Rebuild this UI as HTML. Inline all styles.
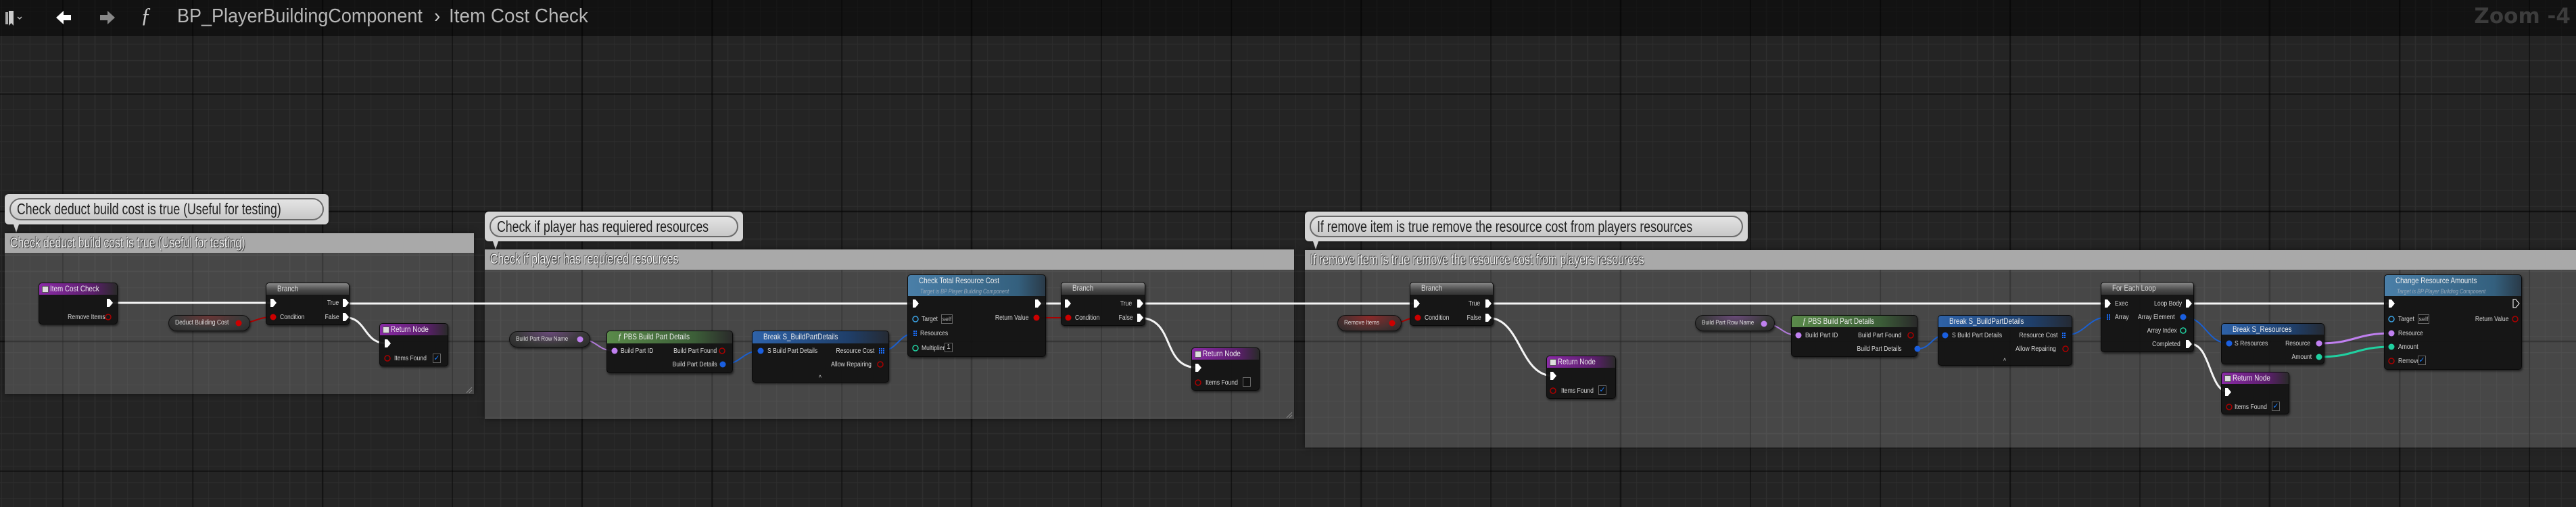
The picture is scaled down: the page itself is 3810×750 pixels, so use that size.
<!DOCTYPE html>
<html><head><meta charset="utf-8"><style>
*{margin:0;padding:0;box-sizing:border-box}
html,body{width:3810px;height:750px;overflow:hidden}
body{position:relative;background-color:#242424;
background-image:
repeating-linear-gradient(90deg,rgba(0,0,0,.55) 0 2px,transparent 2px 192px),
repeating-linear-gradient(0deg,rgba(0,0,0,.55) 0 2px,transparent 2px 192px),
repeating-linear-gradient(90deg,#2e2e2e 0 1px,transparent 1px 24px),
repeating-linear-gradient(0deg,#2e2e2e 0 1px,transparent 1px 24px);
background-position:92px 0,0 140px,20px 0,0 12px;
font-family:"Liberation Sans",sans-serif;}
.top{position:absolute;left:0;top:0;width:3810px;height:53px;background:rgba(0,0,0,.5);z-index:5}
.crumb{position:absolute;top:8px;font-size:29px;color:#b8b8b8;white-space:nowrap;transform:scaleX(.96);transform-origin:0 50%}
.zoom{position:absolute;right:8px;top:6px;font-family:"DejaVu Sans","Liberation Sans",sans-serif;font-weight:bold;font-size:31px;color:#3c3c3c}
.grp{position:absolute;background:rgba(255,255,255,.16);box-shadow:0 0 8px rgba(0,0,0,.5);z-index:1}
.gh{position:absolute;left:0;top:0;right:0;height:29px;background:#a9a9a9;color:#f0f0f0;font-size:21px;line-height:29px;padding-left:8px;text-shadow:1px 1px 1px #222,-1px -1px 1px #444;white-space:nowrap}
.gh span{display:inline-block;transform:scaleX(.75);transform-origin:0 50%}
.bub{position:absolute;background:#d4d4d4;border-radius:6px;z-index:1;box-shadow:0 0 4px rgba(0,0,0,.4)}
.bub div{position:absolute;left:7px;right:7px;top:6px;bottom:6px;border:2px solid #6a6a6a;border-radius:18px;color:#222;font-size:23px;line-height:28px;padding-left:9px;white-space:nowrap;background:linear-gradient(#e4e4e4,#c8c8c8)}
.bub span{display:inline-block;transform:scaleX(.77);transform-origin:0 50%}
.tail{position:absolute;width:0;height:0;border-left:4px solid transparent;border-right:4px solid transparent;border-top:12px solid #d4d4d4;z-index:1}
.n{position:absolute;background:rgba(18,18,18,.93);border:1px solid #0a0a0a;border-radius:5px;z-index:2;box-shadow:1px 2px 3px rgba(0,0,0,.6);overflow:hidden}
.h{position:absolute;left:0;top:0;right:0;color:#eee;font-size:12px;padding-left:16px;white-space:nowrap;line-height:17px}
.h b{font-weight:normal;display:inline-block;transform:scaleX(.82);transform-origin:0 50%}
.pu{background:linear-gradient(90deg,#8a2aa6,#5a1f6a 70%,#2a2a2a)}
.gr{background:linear-gradient(180deg,#8a8a8a,#4a4a4a 60%,#333)}
.gn{background:linear-gradient(90deg,#5a8a4a,#3c5e38 70%,#2a2a2a)}
.bl{background:linear-gradient(90deg,#2e62a8,#1f3f6a 70%,#252a33)}
.tl{background:linear-gradient(90deg,#4a7fa8,#34607e 80%,#2a3a48)}
.sub{position:absolute;left:18px;top:16px;font-size:9px;font-style:italic;color:#9ab;transform:scaleX(.82);transform-origin:0 50%}
.pill{position:absolute;border-radius:12px;border:1px solid #111;z-index:2;color:#ddd;font-size:10px;line-height:22px;padding-left:9px;white-space:nowrap;box-shadow:1px 2px 3px rgba(0,0,0,.6)}
.pill span{display:inline-block;transform:scaleX(.85);transform-origin:0 50%}
.l{position:absolute;font-size:10.5px;color:#d6d6d6;white-space:nowrap;z-index:4;line-height:14px;transform:scaleX(.82);transform-origin:0 50%}
.l.r{transform-origin:100% 50%}
.box{position:absolute;width:12px;height:14px;background:#111;border:1px solid #666;z-index:4;color:#1a7fff;font-size:11px;line-height:12px;text-align:center}
.ic{position:absolute;width:10px;height:10px;background:#ddd;border:1px solid #555;left:4px;top:4px}
svg{position:absolute;left:0;top:0}
</style></head><body>

<div class="top">
<svg width="120" height="53" style="left:0;top:0"><rect x="8" y="18" width="4" height="18" fill="#aaa"/><path d="M13 16h7v22l-3.5-4-3.5 4z" fill="#ccc"/><path d="M26 25l3 3 3-3" stroke="#bbb" stroke-width="1.5" fill="none"/>
<path d="M83 26l11-10v6h11v8H94v6z" fill="#fff"/></svg>
<svg width="60" height="53" style="left:130px;top:0"><path d="M40 26L29 16v6H18v8h11v6z" fill="#888"/></svg>
<div class="crumb" style="left:208px;top:4px;font-family:'Liberation Serif',serif;font-style:italic;font-size:32px;color:#ccc">ƒ</div>
<div class="crumb" style="left:262px;transform:scaleX(.93)">BP_PlayerBuildingComponent</div>
<div class="crumb" style="left:642px;color:#ccc">›</div>
<div class="crumb" style="left:664px">Item Cost Check</div>
<div class="zoom">Zoom -4</div>
</div>

<!-- groups -->
<div class="bub" style="left:7px;top:287px;width:479px;height:45px"><div><span>Check deduct build cost is true (Useful for testing)</span></div></div>
<div class="tail" style="left:20px;top:332px"></div>
<div class="grp" style="left:7px;top:345px;width:694px;height:238px"><div class="gh"><span>Check deduct build cost is true (Useful for testing)</span></div></div>

<div class="bub" style="left:717px;top:313px;width:382px;height:44px"><div><span>Check if player has requiered resources</span></div></div>
<div class="tail" style="left:729px;top:357px"></div>
<div class="grp" style="left:717px;top:369px;width:1197px;height:251px"><div class="gh" style="height:30px"><span>Check if player has requiered resources</span></div></div>

<div class="bub" style="left:1930px;top:313px;width:655px;height:44px"><div><span>If remove item is true remove the resource cost from players resources</span></div></div>
<div class="tail" style="left:1942px;top:357px"></div>
<div class="grp" style="left:1930px;top:370px;width:1890px;height:292px"><div class="gh"><span>If remove item is true remove the resource cost from players resources</span></div></div>

<!-- wires -->
<svg width="3810" height="750" style="z-index:1;position:absolute" fill="none">
<g stroke="#f4f4f4" stroke-width="3">
<path d="M162 448H404M517 449H1354M1535 449H1569M1694 449H2097M2209 449H3119M3240 449H3537"/>
<path d="M507 469C545 469 535 508 573 508"/>
<path d="M1684 470C1740 470 1716 544 1772 544"/>
<path d="M2200 470C2250 470 2247 556 2297 556"/>
<path d="M3240 509C3270 509 3267 580 3297 580"/>
</g>
<g stroke-width="2">
<path d="M353 478C378 478 379 469 404 469" stroke="#a00"/>
<path d="M1533 470H1580" stroke="#a00"/>
<path d="M2059 478C2078 478 2078 470 2097 470" stroke="#a00"/>
<path d="M858 502C884 502 883 519 909 519" stroke="#b07ad8"/>
<path d="M2609 479C2635 479 2634 496 2660 496" stroke="#b07ad8"/>
<path d="M1069 539C1097 539 1097 519 1125 519" stroke="#1a5fd0"/>
<path d="M1303 519C1328 519 1329 493 1354 493" stroke="#1a5fd0"/>
<path d="M2836 516C2856 516 2857 496 2877 496" stroke="#1a5fd0"/>
<path d="M3053 496C3086 496 3086 469 3119 469" stroke="#1a5fd0"/>
<path d="M3229 469C3263 469 3263 508 3297 508" stroke="#1a5fd0"/>
<path d="M3430 508C3484 508 3483 493 3537 493" stroke="#c080f0" stroke-width="3"/>
<path d="M3430 528C3484 528 3483 513 3537 513" stroke="#20d0a0" stroke-width="3"/>
</g>
</svg>

<!-- nodes G1 -->
<div class="n" style="left:57px;top:418px;width:117px;height:62px"><div class="h pu" style="height:17px"><span class="ic"></span><b>Item Cost Check</b></div></div>
<div class="l r" style="left:88px;top:462px">Remove Items</div>
<div class="n" style="left:393px;top:418px;width:124px;height:63px"><div class="h gr" style="height:17px;color:#ddd"><b>Branch</b></div></div>
<div class="l" style="left:414px;top:462px">Condition</div>
<div class="l r" style="left:480px;top:441px">True</div>
<div class="l r" style="left:476px;top:462px">False</div>
<div class="pill" style="left:249px;top:466px;width:121px;height:24px;background:radial-gradient(ellipse at 50% 0,#6a3535,#3a3a3a 60%,#2a2a2a)"><span>Deduct Building Cost</span></div>
<div class="n" style="left:561px;top:478px;width:102px;height:64px"><div class="h pu" style="height:17px"><span class="ic"></span><b>Return Node</b></div></div>
<div class="l" style="left:583px;top:523px">Items Found</div>
<div class="box" style="left:640px;top:523px">✓</div>

<!-- G2 -->
<div class="pill" style="left:753px;top:490px;width:120px;height:24px;background:radial-gradient(ellipse at 50% 0,#6a4a7a,#3a3a3a 60%,#2a2a2a);font-size:9.5px"><span>Build Part Row Name</span></div>
<div class="n" style="left:897px;top:489px;width:187px;height:63px"><div class="h gn" style="height:18px"><b>ƒ PBS Build Part Details</b></div></div>
<div class="l" style="left:918px;top:512px">Build Part ID</div>
<div class="l r" style="left:982px;top:512px">Build Part Found</div>
<div class="l r" style="left:980px;top:532px">Build Part Details</div>
<div class="n" style="left:1112px;top:489px;width:203px;height:77px"><div class="h bl" style="height:18px"><b>Break S_BuildPartDetails</b></div></div>
<div class="l" style="left:1135px;top:512px">S Build Part Details</div>
<div class="l r" style="left:1224px;top:512px">Resource Cost</div>
<div class="l r" style="left:1216px;top:532px">Allow Repairing</div>
<div class="l" style="left:1211px;top:552px">^</div>
<div class="n" style="left:1342px;top:406px;width:205px;height:122px"><div class="h tl" style="height:31px"><b>Check Total Resource Cost</b><div class="sub">Target is BP Player Building Component</div></div></div>
<div class="l" style="left:1363px;top:465px">Target</div>
<div class="box" style="left:1392px;top:465px;width:17px;color:#aaa;font-size:9px">self</div>
<div class="l r" style="left:1461px;top:463px">Return Value</div>
<div class="l" style="left:1361px;top:486px">Resources</div>
<div class="l" style="left:1363px;top:508px">Multiplier</div>
<div class="box" style="left:1397px;top:507px;color:#ccc;font-size:10px">1</div>
<div class="n" style="left:1569px;top:417px;width:125px;height:65px"><div class="h gr" style="height:18px;color:#ddd"><b>Branch</b></div></div>
<div class="l" style="left:1590px;top:463px">Condition</div>
<div class="l r" style="left:1653px;top:442px">True</div>
<div class="l r" style="left:1650px;top:463px">False</div>
<div class="n" style="left:1762px;top:514px;width:101px;height:64px"><div class="h pu" style="height:17px"><span class="ic"></span><b>Return Node</b></div></div>
<div class="l" style="left:1783px;top:559px">Items Found</div>
<div class="box" style="left:1838px;top:558px"></div>

<!-- G3 -->
<div class="pill" style="left:1978px;top:466px;width:95px;height:24px;background:radial-gradient(ellipse at 50% 10%,#8a2a2a,#4a3030 60%,#2a2a2a);font-size:9.5px"><span>Remove Items</span></div>
<div class="n" style="left:2085px;top:417px;width:124px;height:65px"><div class="h gr" style="height:18px;color:#ddd"><b>Branch</b></div></div>
<div class="l" style="left:2107px;top:463px">Condition</div>
<div class="l r" style="left:2168px;top:442px">True</div>
<div class="l r" style="left:2165px;top:463px">False</div>
<div class="n" style="left:2287px;top:526px;width:103px;height:64px"><div class="h pu" style="height:17px"><span class="ic"></span><b>Return Node</b></div></div>
<div class="l" style="left:2309px;top:571px">Items Found</div>
<div class="box" style="left:2364px;top:570px">✓</div>
<div class="pill" style="left:2507px;top:466px;width:118px;height:24px;background:radial-gradient(ellipse at 50% 0,#6a4a7a,#3a3a3a 60%,#2a2a2a);font-size:9.5px"><span>Build Part Row Name</span></div>
<div class="n" style="left:2649px;top:466px;width:187px;height:62px"><div class="h gn" style="height:17px"><b>ƒ PBS Build Part Details</b></div></div>
<div class="l" style="left:2670px;top:489px">Build Part ID</div>
<div class="l r" style="left:2734px;top:489px">Build Part Found</div>
<div class="l r" style="left:2732px;top:509px">Build Part Details</div>
<div class="n" style="left:2866px;top:466px;width:199px;height:75px"><div class="h bl" style="height:17px"><b>Break S_BuildPartDetails</b></div></div>
<div class="l" style="left:2887px;top:489px">S Build Part Details</div>
<div class="l r" style="left:2974px;top:489px">Resource Cost</div>
<div class="l r" style="left:2968px;top:509px">Allow Repairing</div>
<div class="l" style="left:2963px;top:527px">^</div>
<div class="n" style="left:3107px;top:417px;width:138px;height:104px"><div class="h gr" style="height:18px;color:#ddd"><b>For Each Loop</b></div></div>
<div class="l" style="left:3128px;top:442px">Exec</div>
<div class="l r" style="left:3177px;top:442px">Loop Body</div>
<div class="l" style="left:3128px;top:462px">Array</div>
<div class="l r" style="left:3150px;top:462px">Array Element</div>
<div class="l r" style="left:3166px;top:482px">Array Index</div>
<div class="l r" style="left:3174px;top:502px">Completed</div>
<div class="n" style="left:3285px;top:478px;width:153px;height:61px"><div class="h bl" style="height:16px;line-height:16px"><b>Break S_Resources</b></div></div>
<div class="l" style="left:3305px;top:501px">S Resources</div>
<div class="l r" style="left:3372px;top:501px">Resource</div>
<div class="l r" style="left:3383px;top:521px">Amount</div>
<div class="n" style="left:3285px;top:550px;width:101px;height:63px"><div class="h pu" style="height:17px"><span class="ic"></span><b>Return Node</b></div></div>
<div class="l" style="left:3305px;top:595px">Items Found</div>
<div class="box" style="left:3360px;top:594px">✓</div>
<div class="n" style="left:3526px;top:406px;width:204px;height:141px"><div class="h tl" style="height:31px"><b>Change Resource Amounts</b><div class="sub">Target is BP Player Building Component</div></div></div>
<div class="l" style="left:3547px;top:465px">Target</div>
<div class="box" style="left:3576px;top:465px;width:17px;color:#aaa;font-size:9px">self</div>
<div class="l r" style="left:3650px;top:465px">Return Value</div>
<div class="l" style="left:3547px;top:486px">Resource</div>
<div class="l" style="left:3547px;top:506px">Amount</div>
<div class="l" style="left:3547px;top:527px">Remove</div>
<div class="box" style="left:3576px;top:526px">✓</div>

<!-- pins -->
<svg width="3810" height="750" style="z-index:4;position:absolute">
<g fill="#fff">
<path d="M158 442h4l5 6-5 6h-4z"/>
<path d="M400 442h4l5 6-5 6h-4z"/><path d="M507 442h4l5 6-5 6h-4z"/><path d="M507 463h4l5 6-5 6h-4z"/>
<path d="M569 502h4l5 6-5 6h-4z"/>
<path d="M1350 443h4l5 6-5 6h-4z"/><path d="M1531 443h4l5 6-5 6h-4z"/>
<path d="M1575 443h4l5 6-5 6h-4z"/><path d="M1682 443h4l5 6-5 6h-4z"/><path d="M1682 464h4l5 6-5 6h-4z"/>
<path d="M1768 538h4l5 6-5 6h-4z"/>
<path d="M2091 443h4l5 6-5 6h-4z"/><path d="M2197 443h4l5 6-5 6h-4z"/><path d="M2197 464h4l5 6-5 6h-4z"/>
<path d="M2293 550h4l5 6-5 6h-4z"/>
<path d="M3113 443h4l5 6-5 6h-4z"/><path d="M3233 443h4l5 6-5 6h-4z"/><path d="M3233 503h4l5 6-5 6h-4z"/>
<path d="M3291 574h4l5 6-5 6h-4z"/>
<path d="M3533 443h4l5 6-5 6h-4z"/>
</g>
<path d="M3717 443h4l5 6-5 6h-4z" fill="none" stroke="#ddd" stroke-width="1.2"/>
<g fill="#c00">
<circle cx="353" cy="478" r="4.5"/><circle cx="404" cy="469" r="4.5"/><circle cx="1533" cy="470" r="4.5"/><circle cx="1580" cy="470" r="4.5"/>
<circle cx="2059" cy="478" r="4.5"/><circle cx="2097" cy="470" r="4.5"/>
</g>
<g fill="none" stroke="#a00" stroke-width="1.5">
<circle cx="160" cy="469" r="4"/><circle cx="573" cy="530" r="4"/><circle cx="1068" cy="519" r="4"/><circle cx="1302" cy="539" r="4"/>
<circle cx="1772" cy="566" r="4"/><circle cx="2297" cy="578" r="4"/><circle cx="2826" cy="496" r="4"/><circle cx="3055" cy="516" r="4"/>
<circle cx="3297" cy="602" r="4"/><circle cx="3720" cy="472" r="4"/><circle cx="3537" cy="534" r="4"/>
</g>
<g fill="#c080f0"><circle cx="858" cy="502" r="4.5"/><circle cx="909" cy="519" r="4.5"/><circle cx="2609" cy="479" r="4.5"/><circle cx="2660" cy="496" r="4.5"/><circle cx="3430" cy="508" r="4.5"/><circle cx="3537" cy="493" r="4.5"/></g>
<g fill="#1a5fe0"><circle cx="1069" cy="539" r="4.5"/><circle cx="1125" cy="519" r="4.5"/><circle cx="2836" cy="516" r="4.5"/><circle cx="2877" cy="496" r="4.5"/><circle cx="3229" cy="469" r="4.5"/><circle cx="3297" cy="508" r="4.5"/></g>
<g fill="#20d0a0"><circle cx="3430" cy="528" r="4.5"/><circle cx="3537" cy="513" r="4.5"/></g>
<g fill="none" stroke-width="1.5"><circle cx="1354" cy="472" r="4" stroke="#3aa0e0"/><circle cx="3537" cy="472" r="4" stroke="#3aa0e0"/><circle cx="1354" cy="515" r="4" stroke="#20d0a0"/><circle cx="3229" cy="489" r="4" stroke="#20d0a0"/></g>
<g fill="#1a6fff">
<path d="M1300 515h2v2h-2zM1303 515h2v2h-2zM1306 515h2v2h-2zM1300 518h2v2h-2zM1303 518h2v2h-2zM1306 518h2v2h-2zM1300 521h2v2h-2zM1303 521h2v2h-2zM1306 521h2v2h-2z"/>
<path d="M1351 489h2v2h-2zM1354 489h2v2h-2zM1351 492h2v2h-2zM1354 492h2v2h-2zM1351 495h2v2h-2zM1354 495h2v2h-2z"/>
<path d="M3050 492h2v2h-2zM3053 492h2v2h-2zM3050 495h2v2h-2zM3053 495h2v2h-2zM3050 498h2v2h-2zM3053 498h2v2h-2z"/>
<path d="M3116 465h2v2h-2zM3119 465h2v2h-2zM3116 468h2v2h-2zM3119 468h2v2h-2zM3116 471h2v2h-2zM3119 471h2v2h-2z"/>
</g>
<g stroke="#888" fill="none"><path d="M690 581l8-8M694 581l4-4M1903 618l8-8M1907 618l4-4"/></g>
</svg>
</body></html>
